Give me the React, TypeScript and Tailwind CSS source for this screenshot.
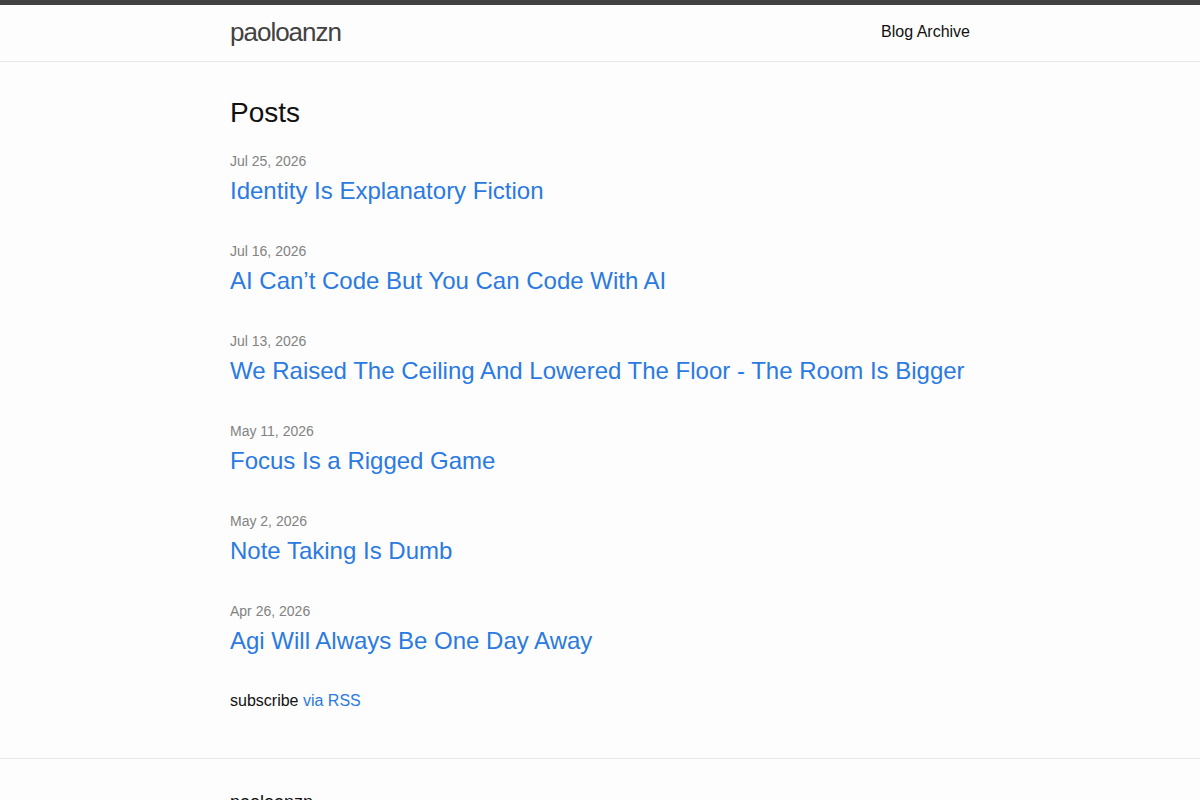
import React from 'react';

const posts = [
  { date: 'Jul 25, 2026', title: 'Identity Is Explanatory Fiction' },
  { date: 'Jul 16, 2026', title: 'AI Can’t Code But You Can Code With AI' },
  { date: 'Jul 13, 2026', title: 'We Raised The Ceiling And Lowered The Floor - The Room Is Bigger' },
  { date: 'May 11, 2026', title: 'Focus Is a Rigged Game' },
  { date: 'May 2, 2026', title: 'Note Taking Is Dumb' },
  { date: 'Apr 26, 2026', title: 'Agi Will Always Be One Day Away' },
];

export default function App() {
  return (
    <div
      className="min-h-screen bg-[#fdfdfd] text-[#111111] text-[16px] leading-[1.5]"
      style={{ fontFamily: '"Liberation Sans", Arial, Helvetica, sans-serif' }}
    >
      {/* header */}
      <header className="border-t-[5px] border-t-[#424242] border-b border-b-[#e8e8e8] min-h-[62px]">
        <div className="max-w-[740px] mx-auto flex justify-between items-start">
          <a href="#" className="text-[26px] leading-[54px] tracking-[-1px] text-[#424242]">
            paoloanzn
          </a>
          <nav className="leading-[54px]">
            <a href="#" className="text-[#111111]">Blog Archive</a>
          </nav>
        </div>
      </header>

      {/* posts */}
      <main className="py-[30px]">
        <div className="max-w-[740px] mx-auto">
          <h1 className="text-[28px] leading-[42px] mb-[15px]">Posts</h1>
          <ul className="flex flex-col gap-[30px] mb-[30px]">
            {posts.map((p) => (
              <li key={p.title}>
                <span className="block text-[14px] leading-[24px] text-[#828282]">{p.date}</span>
                <h3 className="text-[24px] leading-[36px]">
                  <a href="#" className="text-[#2a7ae2]">{p.title}</a>
                </h3>
              </li>
            ))}
          </ul>
          <p className="mb-[15px]">
            subscribe <a href="#" className="text-[#2a7ae2]">via RSS</a>
          </p>
        </div>
      </main>

      {/* footer */}
      <footer className="border-t border-t-[#e8e8e8] py-[30px]">
        <div className="max-w-[740px] mx-auto">
          <h2 className="text-[18px] leading-[27px] mb-[15px]">paoloanzn</h2>
          <div className="flex gap-[30px] text-[15px] text-[#828282]">
            <ul className="w-1/3">
              <li>paoloanzn</li>
            </ul>
          </div>
        </div>
      </footer>
    </div>
  );
}
